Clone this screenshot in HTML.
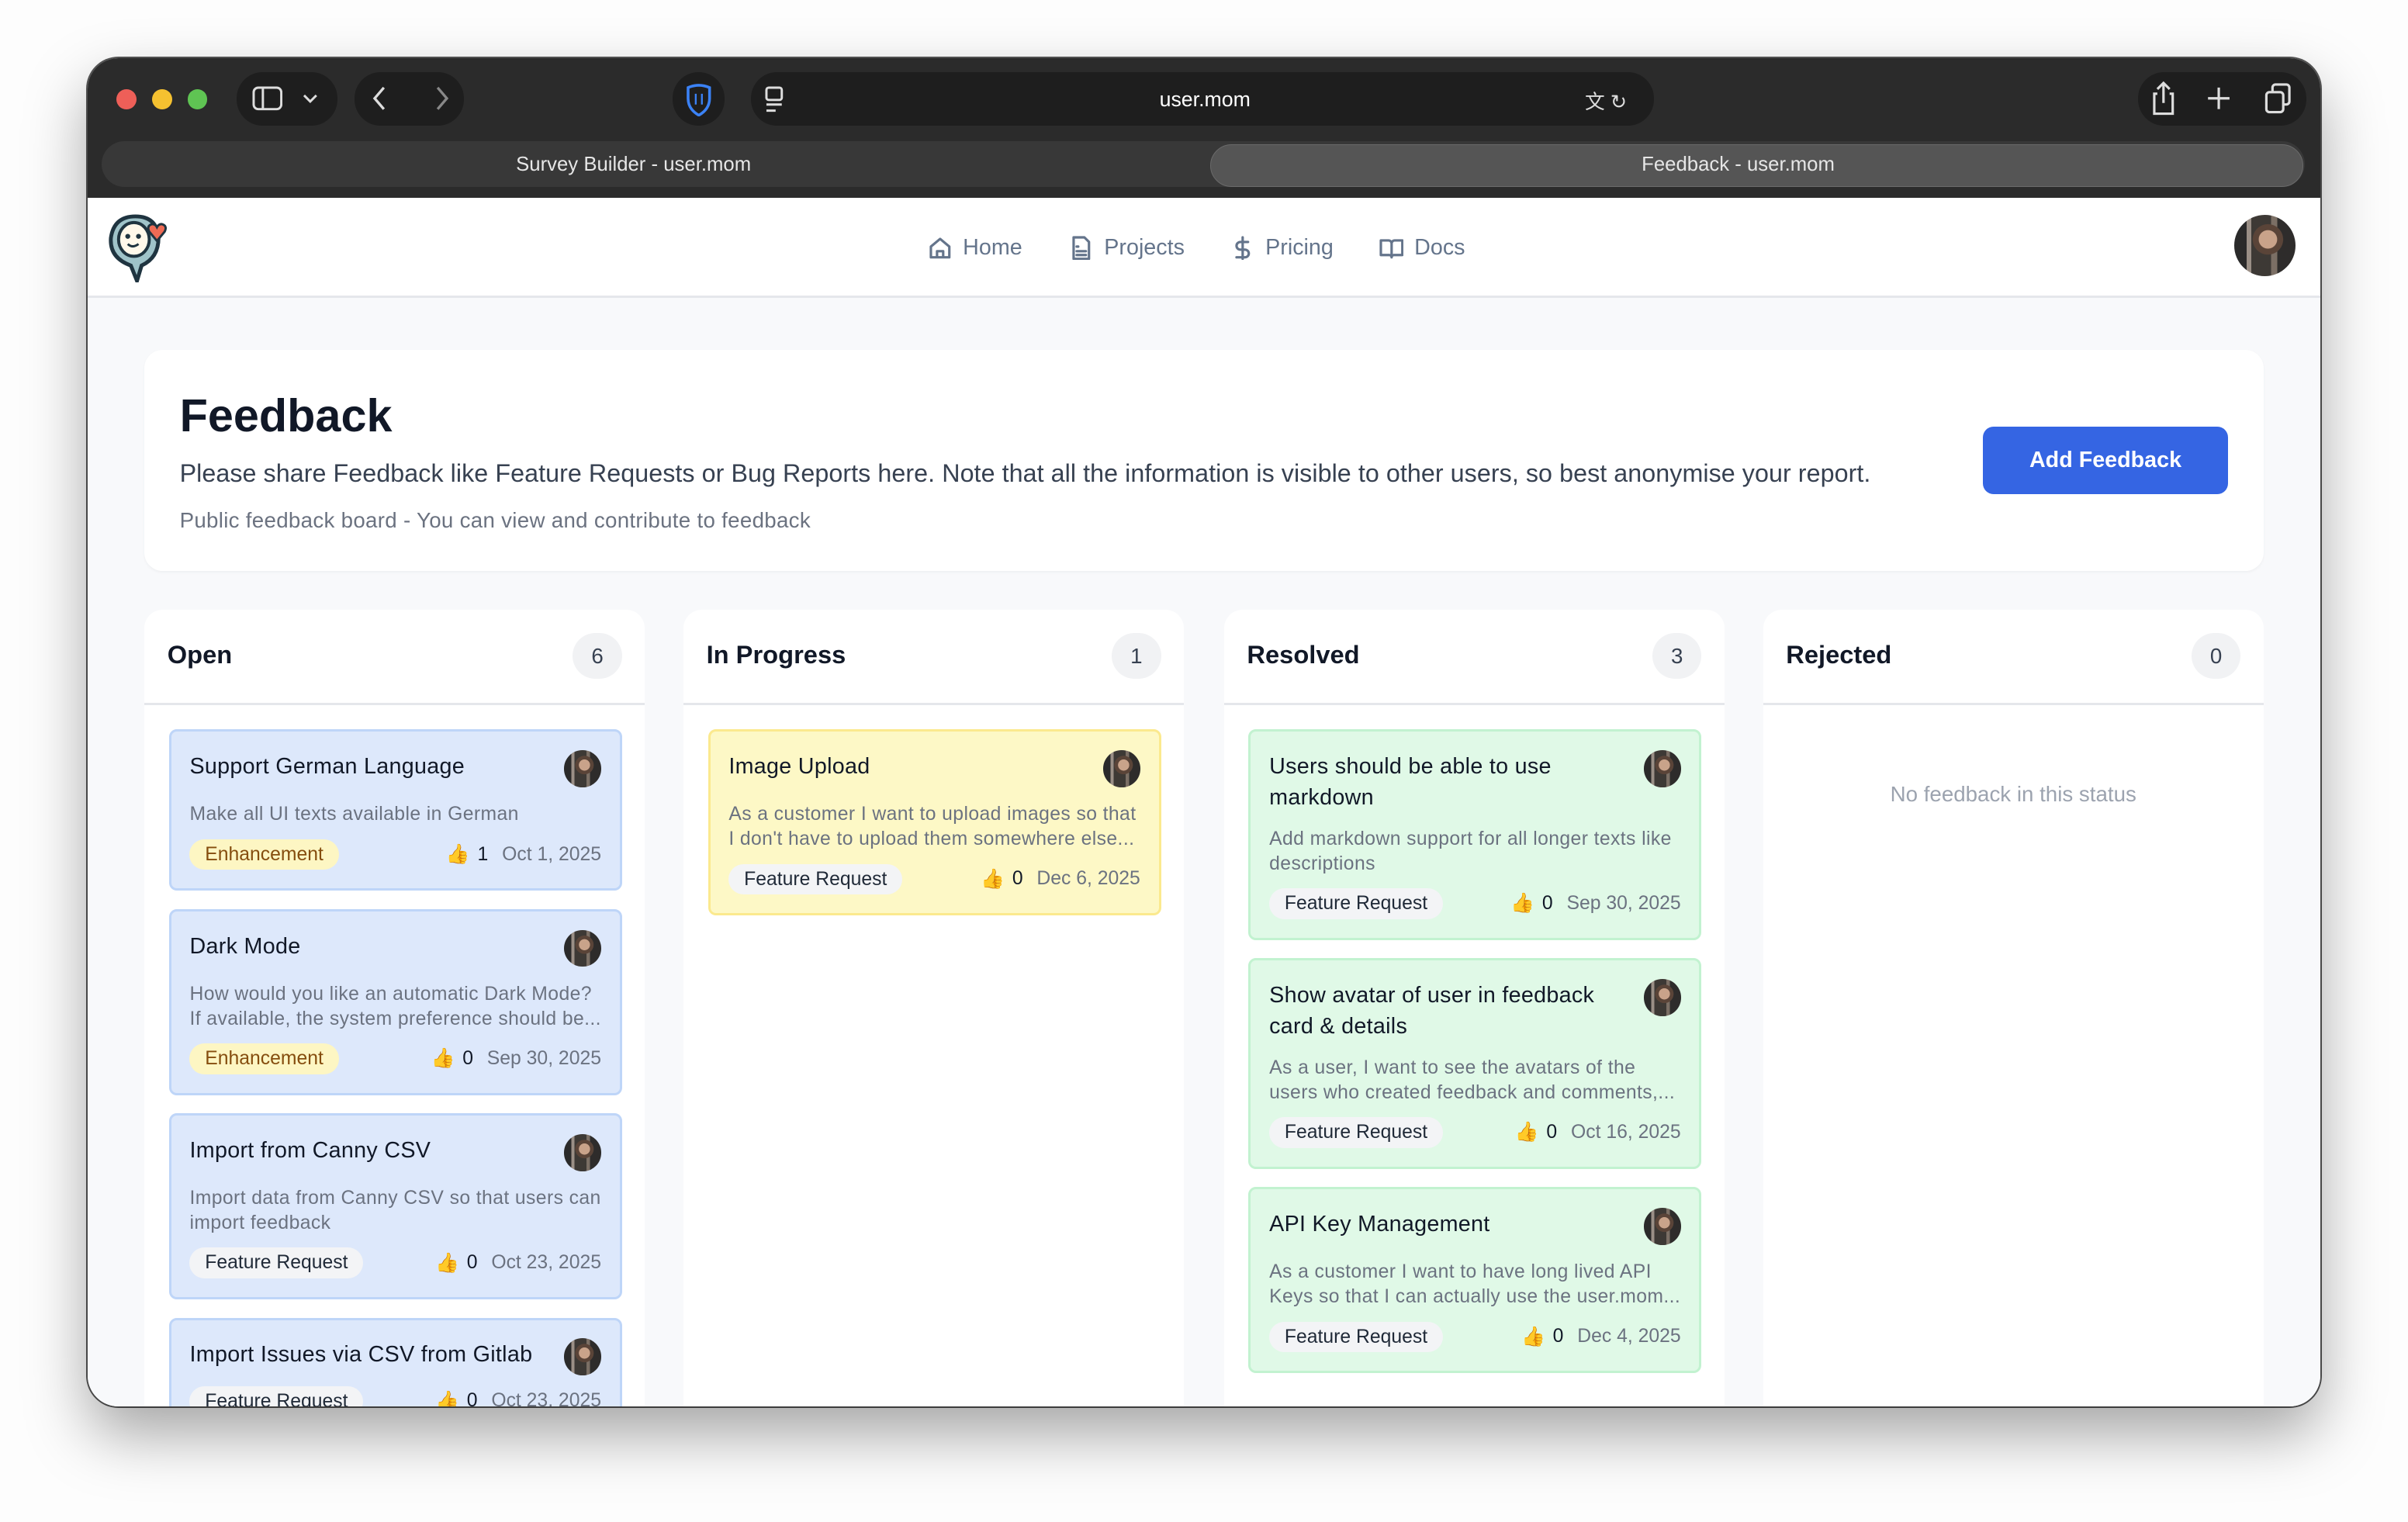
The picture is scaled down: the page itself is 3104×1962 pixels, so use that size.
<!DOCTYPE html>
<html><head><meta charset="utf-8">
<style>
*{box-sizing:border-box;margin:0;padding:0}
html,body{width:3104px;height:1962px;overflow:hidden;background:#fff;font-family:"Liberation Sans",Arial,sans-serif}
#z{zoom:1.9796;width:1568px;height:991px;position:relative;background:#fdfdfd;overflow:hidden}
.win{position:absolute;left:57px;top:38px;width:1454px;height:878px;border-radius:20px;overflow:hidden;background:#f8f9fb;box-shadow:0 18px 40px rgba(0,0,0,.35),0 0 0 1px #555}
.tb{position:absolute;left:0;top:0;width:100%;height:91px;background:#2b2b2b}
.dot{position:absolute;top:20px;width:13px;height:13px;border-radius:50%}
.pill{position:absolute;background:#1e1e1e;border-radius:17px;height:35px;top:9px}
.tabs{position:absolute;left:9px;top:54px;width:1435px;height:30px;background:#383838;border-radius:15px}
.tab{position:absolute;color:#e6e6e6;font-size:13px;top:7px}
.atab{position:absolute;left:731px;top:56px;width:712px;height:28px;border-radius:14px;background:#555;border:1px solid #6a6a6a}
.page{position:absolute;left:0;top:91px;width:100%;bottom:0;background:#f8f9fb;overflow:hidden}
.nav{height:65px;background:#fff;border-bottom:2px solid #e5e7eb;position:relative}
.nv{position:absolute;top:24px;font-size:14.5px;color:#64748b;display:flex;align-items:center;gap:7px}
.nv svg{width:16px;height:16px;fill:none;stroke:#64748b;stroke-width:1.6;stroke-linecap:round;stroke-linejoin:round}
.av{border-radius:50%;background:radial-gradient(circle at 55% 40%,#c9a38a 0 18%,#5a4438 19% 30%,transparent 31%),linear-gradient(90deg,#2a2a2a 0 20%,#9a8f86 20% 28%,#3d3935 28% 60%,#7b6f65 60% 70%,#2e2c2b 70%);}
.hdr{position:absolute;left:37px;top:99px;width:1380px;height:144px;background:#fff;border-radius:12px;box-shadow:0 1px 2px rgba(0,0,0,.04)}
.col{position:absolute;top:268px;width:326px;height:540px;background:#fff;border-radius:12px}
.ch{height:62px;border-bottom:2px solid #e5e7eb;position:relative}
.ct{position:absolute;left:15px;top:20px;font-size:16.5px;font-weight:bold;color:#111827}
.cn{position:absolute;right:15px;top:15px;width:32px;height:30px;border-radius:15px;background:#f1f2f4;text-align:center;line-height:30px;font-size:14px;color:#374151}
.cards{padding:16px 15px 0 16px;display:flex;flex-direction:column;gap:12px}
.card{border:2px solid;border-radius:5px;padding:13px 12px 12px 12px;position:relative}
.b{background:#dde8fb;border-color:#bed5f8}
.y{background:#fdf8c6;border-color:#fbe98e}
.g{background:#e0f9e7;border-color:#c2f2d0}
.t{font-size:14.5px;line-height:20px;color:#111827;padding-right:40px;letter-spacing:.15px}
.d{font-size:12.5px;line-height:16px;color:#6b7280;margin-top:11px;letter-spacing:.2px}
.f{display:flex;align-items:center;justify-content:space-between;margin-top:8px;height:20px}
.tag{font-size:12.5px;padding:0 10px;height:20px;line-height:20px;border-radius:10px;background:#f3f4f6;color:#1f2937}
.tag.e{background:#fdf6c3;color:#854d0e}
.m{font-size:12.5px;color:#6b7280;display:flex;align-items:center;gap:5px}
.m b{font-weight:normal;color:#111827;margin-right:4px}
.card .av{position:absolute;right:12px;top:12px;width:24px;height:24px}
</style></head><body><div id="z">
<div class="win">
 <div class="tb">
  <div class="dot" style="left:19px;background:#ee5f58"></div>
  <div class="dot" style="left:42px;background:#f5c130"></div>
  <div class="dot" style="left:65px;background:#5fc453"></div>
  <div class="pill" style="left:97px;width:66px"></div>
  <svg style="position:absolute;left:107px;top:18px" width="20" height="16" viewBox="0 0 20 16" fill="none" stroke="#ddd" stroke-width="1.5"><rect x="1" y="1" width="18" height="14" rx="3"/><line x1="7" y1="1" x2="7" y2="15"/></svg>
  <svg style="position:absolute;left:140px;top:22px" width="10" height="8" viewBox="0 0 10 8" fill="none" stroke="#ddd" stroke-width="1.5"><path d="M1 2l4 4 4-4"/></svg>
  <div class="pill" style="left:174px;width:71px"></div>
  <svg style="position:absolute;left:184px;top:17px" width="60" height="18" viewBox="0 0 60 18" fill="none" stroke-width="1.7"><path d="M9 2L3 9l6 7" stroke="#ddd"/><path d="M44 2l6 7-6 7" stroke="#888"/></svg>
  <div class="pill" style="left:381px;width:34px"></div>
  <svg style="position:absolute;left:389px;top:16px" width="18" height="22" viewBox="0 0 18 22" fill="none" stroke="#3b82f6" stroke-width="1.8"><path d="M2 3q7-3 14 0v7q0 7-7 11q-7-4-7-11z"/><path d="M7 7v7M11 7v7" stroke-width="1.2"/></svg>
  <div class="pill" style="left:432px;width:588px"></div>
  <svg style="position:absolute;left:440px;top:18px" width="14" height="18" viewBox="0 0 14 18" fill="none" stroke="#ddd" stroke-width="1.5"><rect x="2" y="1" width="10" height="8" rx="1.5"/><path d="M2 12h10M2 16h6"/></svg>
  <div style="position:absolute;left:698px;top:19px;color:#fff;font-size:13.5px">user.mom</div>
  <div style="position:absolute;left:975px;top:18px;color:#ddd;font-size:13px">文 ↻</div>
  <div class="pill" style="left:1335px;width:110px"></div>
  <svg style="position:absolute;left:1342px;top:14px" width="96" height="24" viewBox="0 0 96 24" fill="none" stroke="#ddd" stroke-width="1.6"><path d="M6 9H4v13h12V9h-2M10 15V2M6 6l4-4 4 4"/><path d="M46 5v14M39 12h14"/><rect x="77" y="8" width="11" height="13" rx="2"/><path d="M81 8V5a2 2 0 0 1 2-2h7a2 2 0 0 1 2 2v9a2 2 0 0 1-2 2h-2"/></svg>
  <div class="tabs"></div>
  <div class="tab" style="left:279px;top:62px">Survey Builder - user.mom</div>
  <div class="atab"></div>
  <div class="tab" style="left:1012px;top:62px">Feedback - user.mom</div>
 </div>
 <div class="page">
  <div class="nav">
   <svg style="position:absolute;left:12px;top:9px" width="42" height="46" viewBox="0 0 42 46"><path d="M20 45l-4-10Q2 30 3 17Q5 3 19 3q14 0 15 14q0 13-11 18z" fill="#9fc3c9" stroke="#1f3440" stroke-width="2.5"/><ellipse cx="18" cy="18" rx="10" ry="11" fill="#fff8ea" stroke="#1f3440" stroke-width="2"/><circle cx="14" cy="16" r="1.6" fill="#1f3440"/><circle cx="21" cy="16" r="1.6" fill="#1f3440"/><path d="M14 21q3 3 7 0" stroke="#1f3440" stroke-width="1.5" fill="none"/><path d="M33 19l-5-6q-2-4 2-5q2 0 3 2q1-2 3-2q4 1 2 5z" fill="#ee6b55" stroke="#1f3440" stroke-width="1.5"/></svg>
   <div class="nv" style="left:547px"><svg viewBox="0 0 16 16"><path d="M2 7l6-5 6 5v7H2z M6 14v-4h4v4"/></svg>Home</div>
   <div class="nv" style="left:639px"><svg viewBox="0 0 16 16"><path d="M3 1h7l3 3v11H3z M5 7h1M5 10h6M5 12.5h6"/></svg>Projects</div>
   <div class="nv" style="left:744px"><svg viewBox="0 0 16 16"><path d="M8 1v14M11.5 4H6.5a2.5 2.5 0 0 0 0 5h3a2.5 2.5 0 0 1 0 5H4"/></svg>Pricing</div>
   <div class="nv" style="left:841px"><svg viewBox="0 0 16 16"><path d="M1 3h5a2 2 0 0 1 2 2v9a1.5 1.5 0 0 0-1.5-1.5H1zM15 3h-5a2 2 0 0 0-2 2v9a1.5 1.5 0 0 1 1.5-1.5H15z"/></svg>Docs</div>
   <div class="av" style="position:absolute;left:1398px;top:11px;width:40px;height:40px"></div>
  </div>
  <div class="hdr">
   <div style="position:absolute;left:23px;top:25px;font-size:30px;font-weight:bold;color:#111827">Feedback</div>
   <div style="position:absolute;left:23px;top:71px;font-size:16.3px;color:#374151;letter-spacing:.03px">Please share Feedback like Feature Requests or Bug Reports here. Note that all the information is visible to other users, so best anonymise your report.</div>
   <div style="position:absolute;left:23px;top:103px;font-size:14px;color:#6b7280;letter-spacing:.15px">Public feedback board - You can view and contribute to feedback</div>
   <div style="position:absolute;left:1197px;top:50px;width:160px;height:44px;border-radius:7px;background:#3565e3;color:#fff;font-weight:bold;font-size:14.5px;text-align:center;line-height:44px">Add Feedback</div>
  </div>

  <div class="col" style="left:37px">
   <div class="ch"><div class="ct">Open</div><div class="cn">6</div></div>
   <div class="cards">
    <div class="card b"><div class="av"></div><div class="t">Support German Language</div><div class="d" style="margin-top:13px">Make all UI texts available in German</div><div class="f"><span class="tag e">Enhancement</span><span class="m">👍<b>1</b>Oct 1, 2025</span></div></div>
    <div class="card b"><div class="av"></div><div class="t">Dark Mode</div><div class="d" style="margin-top:13px">How would you like an automatic Dark Mode? If available, the system preference should be...</div><div class="f"><span class="tag e">Enhancement</span><span class="m">👍<b>0</b>Sep 30, 2025</span></div></div>
    <div class="card b"><div class="av"></div><div class="t">Import from Canny CSV</div><div class="d" style="margin-top:13px">Import data from Canny CSV so that users can import feedback</div><div class="f"><span class="tag">Feature Request</span><span class="m">👍<b>0</b>Oct 23, 2025</span></div></div>
    <div class="card b"><div class="av"></div><div class="t">Import Issues via CSV from Gitlab</div><div class="f" style="margin-top:10px"><span class="tag">Feature Request</span><span class="m">👍<b>0</b>Oct 23, 2025</span></div></div>
   </div>
  </div>

  <div class="col" style="left:388px">
   <div class="ch"><div class="ct">In Progress</div><div class="cn">1</div></div>
   <div class="cards">
    <div class="card y"><div class="av"></div><div class="t">Image Upload</div><div class="d" style="margin-top:13px">As a customer I want to upload images so that I don't have to upload them somewhere else...</div><div class="f"><span class="tag">Feature Request</span><span class="m">👍<b>0</b>Dec 6, 2025</span></div></div>
   </div>
  </div>

  <div class="col" style="left:740px">
   <div class="ch"><div class="ct">Resolved</div><div class="cn">3</div></div>
   <div class="cards">
    <div class="card g"><div class="av"></div><div class="t">Users should be able to use markdown</div><div class="d" style="margin-top:9px">Add markdown support for all longer texts like descriptions</div><div class="f"><span class="tag">Feature Request</span><span class="m">👍<b>0</b>Sep 30, 2025</span></div></div>
    <div class="card g"><div class="av"></div><div class="t">Show avatar of user in feedback card &amp; details</div><div class="d" style="margin-top:9px">As a user, I want to see the avatars of the users who created feedback and comments,...</div><div class="f"><span class="tag">Feature Request</span><span class="m">👍<b>0</b>Oct 16, 2025</span></div></div>
    <div class="card g"><div class="av"></div><div class="t">API Key Management</div><div class="d" style="margin-top:13px">As a customer I want to have long lived API Keys so that I can actually use the user.mom...</div><div class="f"><span class="tag">Feature Request</span><span class="m">👍<b>0</b>Dec 4, 2025</span></div></div>
   </div>
  </div>

  <div class="col" style="left:1091px">
   <div class="ch"><div class="ct">Rejected</div><div class="cn">0</div></div>
   <div style="text-align:center;margin-top:50px;font-size:14px;color:#9ca3af">No feedback in this status</div>
  </div>
 </div>
</div>
</div></body></html>
